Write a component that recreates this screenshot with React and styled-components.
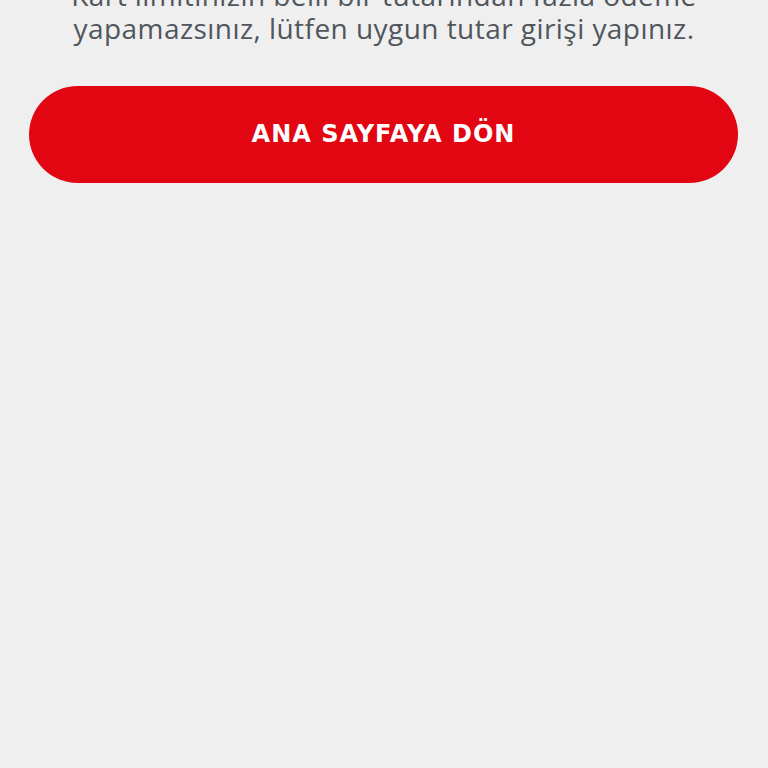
import React from "react";
import styled, { createGlobalStyle } from "styled-components";

const GlobalStyle = createGlobalStyle`
  html, body {
    margin: 0;
    padding: 0;
    background: #efefef;
  }
  body {
    font-family: "Open Sans", "Liberation Sans", sans-serif;
  }
`;

const Page = styled.div`
  width: 768px;
  height: 768px;
  overflow: hidden;
  background: #efefef;
  display: flex;
  flex-direction: column;
  align-items: center;
`;

const Message = styled.p`
  margin: -21px 0 0;
  width: 720px;
  text-align: center;
  font-size: 28px;
  line-height: 33px;
  color: #50565c;
  letter-spacing: 0.45px;
`;

const HomeButton = styled.button`
  margin-top: 41px;
  width: 709px;
  height: 97px;
  border: none;
  border-radius: 49px;
  background: #e20613;
  color: #ffffff;
  font-family: "DejaVu Sans", "Open Sans", sans-serif;
  font-weight: 700;
  font-size: 24px;
  letter-spacing: 1px;
  padding: 0 0 2px 1px;
  cursor: pointer;
  transform: translateX(-1px);
`;

export default function App() {
  return (
    <>
      <GlobalStyle />
      <Page>
        <Message>
          Kart limitinizin belli bir tutarından fazla ödeme
          <br />
          yapamazsınız, lütfen uygun tutar girişi yapınız.
        </Message>
        <HomeButton>ANA SAYFAYA DÖN</HomeButton>
      </Page>
    </>
  );
}
